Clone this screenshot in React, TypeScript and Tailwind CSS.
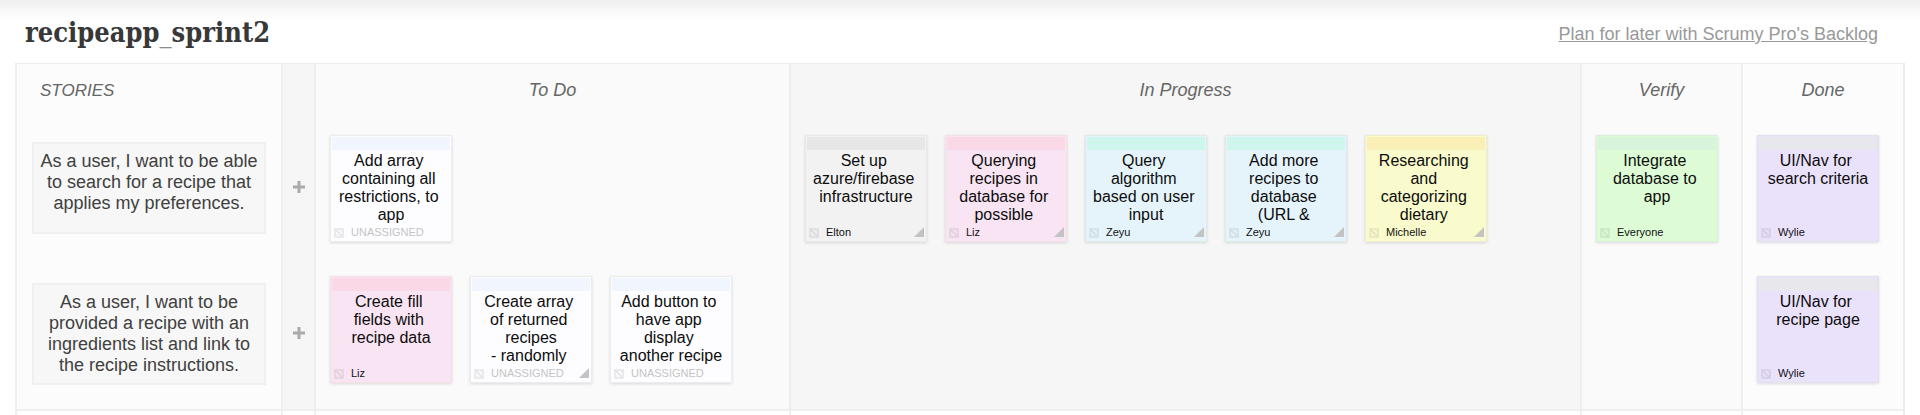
type Tone = 'white' | 'gray' | 'pink' | 'blue' | 'yellow' | 'green' | 'purple';

type Task = {
  lines: string;
  owner?: string;
  tone: Tone;
  more?: boolean;
};

type Story = {
  text: string;
  columns: Task[][];
};

const tones: Record<Tone, { body: string; strip: string }> = {
  white: { body: 'bg-[#fdfdff] border-[#ececec]', strip: 'bg-[#f0f5fe]' },
  gray: { body: 'bg-[#f2f2f2] border-[#e8e8e8]', strip: 'bg-[#e7e7e7]' },
  pink: { body: 'bg-[#f9e4f3] border-[#f2dfe8]', strip: 'bg-[#fad8e6]' },
  blue: { body: 'bg-[#e5f4fb] border-[#dcebea]', strip: 'bg-[#cff6ec]' },
  yellow: { body: 'bg-[#fafbcd] border-[#efecd0]', strip: 'bg-[#fbefb8]' },
  green: { body: 'bg-[#ddfcd6] border-[#d9f0d9]', strip: 'bg-[#d6f4da]' },
  purple: { body: 'bg-[#eae1fb] border-[#e4e0ee]', strip: 'bg-[#e8e7ec]' },
};

const stories: Story[] = [
  {
    text: 'As a user, I want to be able to search for a recipe that applies my preferences.',
    columns: [
      [{ lines: 'Add array \ncontaining all \nrestrictions, to \napp', tone: 'white' }],
      [
        { lines: 'Set up \nazure/firebase \ninfrastructure', owner: 'Elton', tone: 'gray', more: true },
        { lines: 'Querying \nrecipes in \ndatabase for \npossible ', owner: 'Liz', tone: 'pink', more: true },
        { lines: 'Query \nalgorithm \nbased on user \ninput', owner: 'Zeyu', tone: 'blue', more: true },
        { lines: 'Add more \nrecipes to \ndatabase \n(URL & ', owner: 'Zeyu', tone: 'blue', more: true },
        { lines: 'Researching \nand \ncategorizing \ndietary ', owner: 'Michelle', tone: 'yellow', more: true },
      ],
      [{ lines: 'Integrate \ndatabase to \napp', owner: 'Everyone', tone: 'green' }],
      [{ lines: 'UI/Nav for \nsearch criteria', owner: 'Wylie', tone: 'purple' }],
    ],
  },
  {
    text: 'As a user, I want to be provided a recipe with an ingredients list and link to the recipe instructions.',
    columns: [
      [
        { lines: 'Create fill \nfields with \nrecipe data', owner: 'Liz', tone: 'pink' },
        { lines: 'Create array \nof returned \nrecipes\n- randomly ', tone: 'white', more: true },
        { lines: 'Add button to \nhave app \ndisplay \nanother recipe', tone: 'white' },
      ],
      [],
      [],
      [{ lines: 'UI/Nav for \nrecipe page', owner: 'Wylie', tone: 'purple' }],
    ],
  },
];

const headings = ['To Do', 'In Progress', 'Verify', 'Done'];
const fills = ['bg-[#fafafa]', 'bg-[#f6f6f6]', 'bg-[#fafafa]', 'bg-[#fcfcfc]'];

function Card({ task }: { task: Task }) {
  const tone = tones[task.tone];
  return (
    <article
      className={`flex h-[107px] w-[122px] shrink-0 flex-col border p-px shadow-[0_1px_3px_rgba(0,0,0,0.13)] ${tone.body}`}
    >
      <div className={`h-[13px] shrink-0 ${tone.strip}`} />
      <p className="mt-[2px] h-[72px] shrink-0 overflow-hidden whitespace-pre text-center text-[16px] leading-[18px] text-[#0c0c0c]">
        {task.lines}
      </p>
      <div className="flex h-[15px] items-center">
        <button type="button" aria-label="Expand" className="ml-[2px] mt-[3px] opacity-[0.1]">
          <svg width="10" height="10" viewBox="0 0 10 10" fill="none" stroke="#333" className="block">
            <rect x="1" y="1" width="8" height="8" strokeWidth="1.6" />
            <path d="M1 1L9 9" strokeWidth="1.8" />
            <path d="M5 1.5H8.5V5ZM1.5 5V8.5H5Z" fill="#333" stroke="none" opacity="0.5" />
          </svg>
        </button>
        <span className={`ml-[7px] grow text-[11px] leading-[14px] ${task.owner ? 'text-[#111]' : 'text-[#c4c4c4]'}`}>
          {task.owner ?? 'UNASSIGNED'}
        </span>
        {task.more && (
          <svg width="10" height="10" viewBox="0 0 10 10" className="mr-px block">
            <path d="M10 0V10H0Z" fill="#c3c3c3" />
          </svg>
        )}
      </div>
    </article>
  );
}

export default function App() {
  return (
    <div className="overflow-hidden bg-white font-['Liberation_Sans',Arial,sans-serif]">
      <header className="flex h-[63px] items-start justify-between bg-[linear-gradient(to_bottom,#efefef_0,#ffffff_20px)] pl-[25px] pr-[42px]">
        <h1 className="pt-[14px] font-['DejaVu_Serif_Condensed','DejaVu_Serif',serif] text-[27px] font-bold leading-[38px] text-[#383838]">
          recipeapp<span className="font-normal text-[#8c8c8c]">_</span>sprint2
        </h1>
        <a href="#backlog" className="pt-[24px] text-[18px] leading-[21px] text-[#999] underline">
          Plan for later with Scrumy Pro's Backlog
        </a>
      </header>

      <main className="px-[15px]">
        <table className="w-full table-fixed border-separate border-spacing-0 border-r-2 border-t border-[#ececec]">
          <colgroup>
            <col className="w-[266px]" />
            <col className="w-[33px]" />
            <col className="w-[475px]" />
            <col />
            <col className="w-[161px]" />
            <col className="w-[162px]" />
          </colgroup>
          <thead>
            <tr className="h-[52px]">
              <th className="border-l-2 border-[#efefef] bg-[#fcfcfc] pl-[23px] text-left text-[17px] font-normal italic leading-[21px] text-[#666]">
                STORIES
              </th>
              <td className="border-l-2 border-[#efefef] bg-[#f6f6f6]" />
              {headings.map((h, i) => (
                <th
                  key={h}
                  className={`border-l-2 border-[#efefef] text-[18px] font-normal italic leading-[21px] text-[#666] ${fills[i]}`}
                >
                  {h}
                </th>
              ))}
            </tr>
          </thead>
          <tbody>
            {stories.map((story, row) => {
              const last = row === stories.length - 1;
              const edge = last ? 'border-b-2 pb-[26px]' : 'pb-[15px]';
              return (
                <tr key={story.text}>
                  <td className={`border-l-2 border-[#efefef] bg-[#fcfcfc] px-[15px] pt-[26px] align-top ${last ? 'border-b-2' : ''}`}>
                    <div className="min-h-[92px] border-2 border-[#f0f0f0] bg-[#f7f7f7] px-[5px] py-[7px] text-center text-[18px] leading-[21px] text-[#404040]">
                      {story.text}
                    </div>
                  </td>
                  <td className={`border-l-2 border-[#efefef] bg-[#f6f6f6] p-0 align-middle ${last ? 'border-b-2' : ''}`}>
                    <button type="button" aria-label="Add task" className="mx-auto block">
                      <svg width="12" height="12" viewBox="0 0 12 12" className="block">
                        <path d="M6 0V12M0 6H12" stroke="#aaa" strokeWidth="3" />
                      </svg>
                    </button>
                  </td>
                  {story.columns.map((tasks, i) => (
                    <td
                      key={headings[i]}
                      className={`border-l-2 border-[#efefef] pl-[14px] pt-[19px] align-top ${edge} ${fills[i]}`}
                    >
                      <div className="flex gap-[18px]">
                        {tasks.map((task) => (
                          <Card key={task.lines} task={task} />
                        ))}
                      </div>
                    </td>
                  ))}
                </tr>
              );
            })}
            <tr className="h-[4px]">
              {[0, 1, 2, 3, 4, 5].map((i) => (
                <td key={i} className="border-l-2 border-[#efefef] bg-white p-0" />
              ))}
            </tr>
          </tbody>
        </table>
      </main>
    </div>
  );
}
